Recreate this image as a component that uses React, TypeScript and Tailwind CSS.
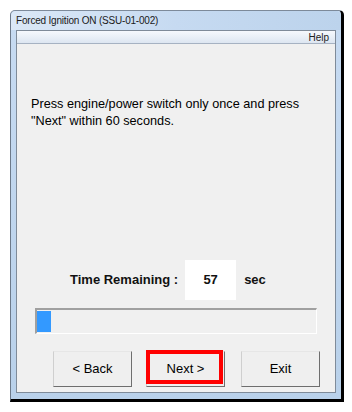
import React from "react";

export default function App() {
  const progress = 5; // percent of the bar filled

  return (
    <div className="w-[352px] h-[412px] bg-white pt-[10px] pl-[10px]" style={{ fontFamily: "'Liberation Sans', Arial, sans-serif" }}>
      {/* Window */}
      <div className="w-[334px] h-[392px] flex flex-col rounded-t-[5px] border-l border-t border-l-[#6d7a8a] border-t-[#7d8a9a] border-r-[3px] border-b-[3px] border-r-black border-b-black bg-gradient-to-b from-[#c7dbf2] to-[#b9d1ea]">
        {/* Title bar */}
        <div className="h-[19px] flex items-center pl-[5px] text-[10px] tracking-[-0.2px] text-[#1a1a1a] bg-gradient-to-r from-[#dbe8f6] via-[#c6daf1] to-[#bcd3ec] rounded-t-[5px]">
          Forced Ignition ON (SSU-01-002)
        </div>

        {/* Client area */}
        <div className="flex-1 flex flex-col ml-[5px] mr-[5px] mb-[6px] border border-[#7f8b99] bg-[#f0f0f0]">
          {/* Menu bar */}
          <div className="h-[13px] flex items-center justify-end pr-[6px] text-[10px] text-[#222] bg-gradient-to-b from-[#f6f9fd] to-[#dde6f1] border-b border-[#a6b2c2]">
            Help
          </div>

          {/* Body */}
          <div className="flex-1 flex flex-col px-[14px]">
            <p className="mt-[52px] text-[12.7px] leading-[17px] text-black">
              Press engine/power switch only once and press
              <br />
              "Next" within 60 seconds.
            </p>

            <div className="mt-[130px] ml-[39px] flex items-center gap-[7px] text-[13px] font-bold text-[#111]">
              <span>Time Remaining :</span>
              <span className="w-[51px] h-[40px] flex items-center justify-center bg-white">57</span>
              <span className="ml-[1px]">sec</span>
            </div>

            <div className="mt-[8px] mx-[4px] h-[26px] border-t-2 border-l-2 border-t-[#a0a0a0] border-l-[#a0a0a0] border-b border-r border-b-white border-r-white bg-[#f0f0f0] p-[1px] pl-0">
              <div className="h-full bg-[#3399ff]" style={{ width: `${progress}%` }} />
            </div>

            <div className="mt-[17px] ml-[22px] flex items-start text-[13px] text-black">
              <button className="w-[79px] h-[36px] bg-[#efefef] border border-t-[#e6e6e6] border-l-[#cfcfcf] border-r-[#6e6e6e] border-b-[#6e6e6e]">
                &lt; Back
              </button>
              <button className="ml-[14px] w-[79px] h-[36px] bg-[#efefef] border border-t-[#e6e6e6] border-l-[#cfcfcf] border-r-[#6e6e6e] border-b-[#6e6e6e] relative">
                Next &gt;
                <span className="absolute left-[-1px] top-[-2px] w-[77px] h-[34px] border-[4px] border-[#ff0000]" />
              </button>
              <button className="ml-[16px] w-[79px] h-[36px] bg-[#efefef] border border-t-[#e6e6e6] border-l-[#cfcfcf] border-r-[#6e6e6e] border-b-[#6e6e6e]">
                Exit
              </button>
            </div>
          </div>
        </div>
      </div>
    </div>
  );
}
